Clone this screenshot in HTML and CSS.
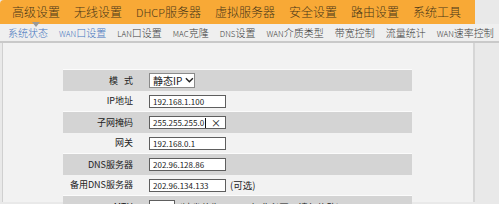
FILE: index.html
```html
<!DOCTYPE html>
<html lang="zh-CN">
<head>
<meta charset="utf-8">
<link rel="stylesheet" href="styles.css">
</head>
<body>
<div class="wrap">
  <nav class="nav">
    <span class="nav-item current">高级设置</span>
    <span class="nav-item">无线设置</span>
    <span class="nav-item"><span class="en">DHCP</span>服务器</span>
    <span class="nav-item">虚拟服务器</span>
    <span class="nav-item">安全设置</span>
    <span class="nav-item">路由设置</span>
    <span class="nav-item">系统工具</span>
  </nav>
  <div class="tabs">
    <span class="tab blue">系统状态</span>
    <span class="tab blue"><span class="en">WAN</span>口设置</span>
    <span class="tab"><span class="en">LAN</span>口设置</span>
    <span class="tab"><span class="en">MAC</span>克隆</span>
    <span class="tab"><span class="en">DNS</span>设置</span>
    <span class="tab"><span class="en">WAN</span>介质类型</span>
    <span class="tab">带宽控制</span>
    <span class="tab">流量统计</span>
    <span class="tab"><span class="en">WAN</span>速率控制</span>
  </div>
  <main class="main">
    <table class="form">
      <tr class="dark">
        <td class="lbl">模&nbsp;&nbsp;&nbsp;式</td>
        <td class="val"><span class="select">静态IP<svg class="chev" viewBox="0 0 10 6" width="9" height="6"><path d="M1 1 L5 5 L9 1" fill="none" stroke="#222" stroke-width="1.6"/></svg></span></td>
      </tr>
      <tr>
        <td class="lbl">IP地址</td>
        <td class="val"><input class="field" type="text" value="192.168.1.100"></td>
      </tr>
      <tr class="dark">
        <td class="lbl">子网掩码</td>
        <td class="val"><span class="field clear"><span class="txt">255.255.255.0</span><span class="caret"></span><span class="x">×</span></span></td>
      </tr>
      <tr>
        <td class="lbl">网关</td>
        <td class="val"><input class="field" type="text" value="192.168.0.1"></td>
      </tr>
      <tr class="dark">
        <td class="lbl">DNS服务器</td>
        <td class="val"><input class="field" type="text" value="202.96.128.86"></td>
      </tr>
      <tr>
        <td class="lbl">备用DNS服务器</td>
        <td class="val"><input class="field" type="text" value="202.96.134.133"><span class="note">(可选)</span></td>
      </tr>
      <tr class="dark">
        <td class="lbl">MTU</td>
        <td class="val"><input class="field short" type="text" value="1500"><span class="note">(缺省值为1500，如非必要，请勿修改)</span></td>
      </tr>
    </table>
  </main>
</div>
</body>
</html>
```

FILE: styles.css
```css
html, body {
  margin: 0;
  padding: 0;
}
body {
  background: #e9e9e9;
  font-family: "Noto Sans CJK SC", "Noto Sans", sans-serif;
  color: #222;
  height: 204px;
  overflow: hidden;
}
.wrap {
  width: 475px;
}
.nav {
  height: 24px;
  background: #f8a936;
  border-top-left-radius: 4px;
  display: flex;
  align-items: center;
  gap: 14px;
  padding-left: 12px;
  font-size: 12px;
  font-weight: 300;
  color: #4a3818;
  white-space: nowrap;
}
.nav .en {
  font-size: 11px;
}
.nav-item {
  position: relative;
  line-height: 24px;
}
.nav-item.current::after {
  content: "";
  position: absolute;
  left: 20px;
  top: 22px;
  border-left: 4px solid transparent;
  border-right: 4px solid transparent;
  border-top: 5px solid #9a9a9a;
}
.tabs {
  height: 19px;
  border-bottom: 2px solid #c9c9c9;
  background: #efefef;
  width: 499px;
  display: flex;
  align-items: center;
  gap: 11px;
  padding-left: 8px;
  box-sizing: border-box;
  font-size: 10px;
  font-weight: 300;
  color: #3c3c3c;
  white-space: nowrap;
  overflow: visible;
}
.tabs .en {
  font-size: 8px;
}
.tabs .tab.blue {
  color: #4474bd;
}
.main {
  margin-left: 2px;
  border-left: 1px solid #d0d0d0;
  border-right: 2px solid #d6d6d6;
  background: #f2f2f2;
  height: 159px;
  padding-top: 26px;
  box-sizing: border-box;
}
.form {
  margin-left: 60px;
  width: 349px;
  border-collapse: collapse;
}
.form tr {
  height: 21px;
}
.form tr.dark td {
  background: #d4d4d4;
  border-top: 1px solid #fbfbfb;
}
.form td {
  padding: 0;
  font-size: 9px;
  color: #222;
  white-space: nowrap;
}
.form td.lbl {
  width: 70px;
  text-align: right;
  padding-right: 13px;
}
.form td.val {
  padding-left: 3px;
}
.field {
  box-sizing: border-box;
  width: 77px;
  height: 13px;
  border: 1px solid #5e5e5e;
  background: #fff;
  padding: 0 0 0 3px;
  margin: 0;
  font-family: "Noto Sans CJK SC", "Noto Sans", sans-serif;
  font-size: 8px;
  color: #222;
  vertical-align: middle;
  outline: none;
}
.field.short {
  width: 26px;
}
.field.clear {
  display: inline-flex;
  align-items: center;
  line-height: 11px;
}
.field.clear .caret {
  display: inline-block;
  width: 1px;
  height: 10px;
  background: #111;
  margin-left: 1px;
}
.field.clear .x {
  margin-left: auto;
  margin-right: 4px;
  font-size: 10px;
  color: #111;
}
.select {
  box-sizing: border-box;
  display: inline-flex;
  align-items: center;
  width: 46px;
  height: 15px;
  border: 1px solid #8a8a8a;
  background: #fff;
  padding-left: 3px;
  font-size: 10px;
  color: #222;
  vertical-align: middle;
}
.select .chev {
  margin-left: 3px;
}
.note {
  margin-left: 4px;
  font-size: 9.5px;
  color: #222;
  vertical-align: middle;
}
```
